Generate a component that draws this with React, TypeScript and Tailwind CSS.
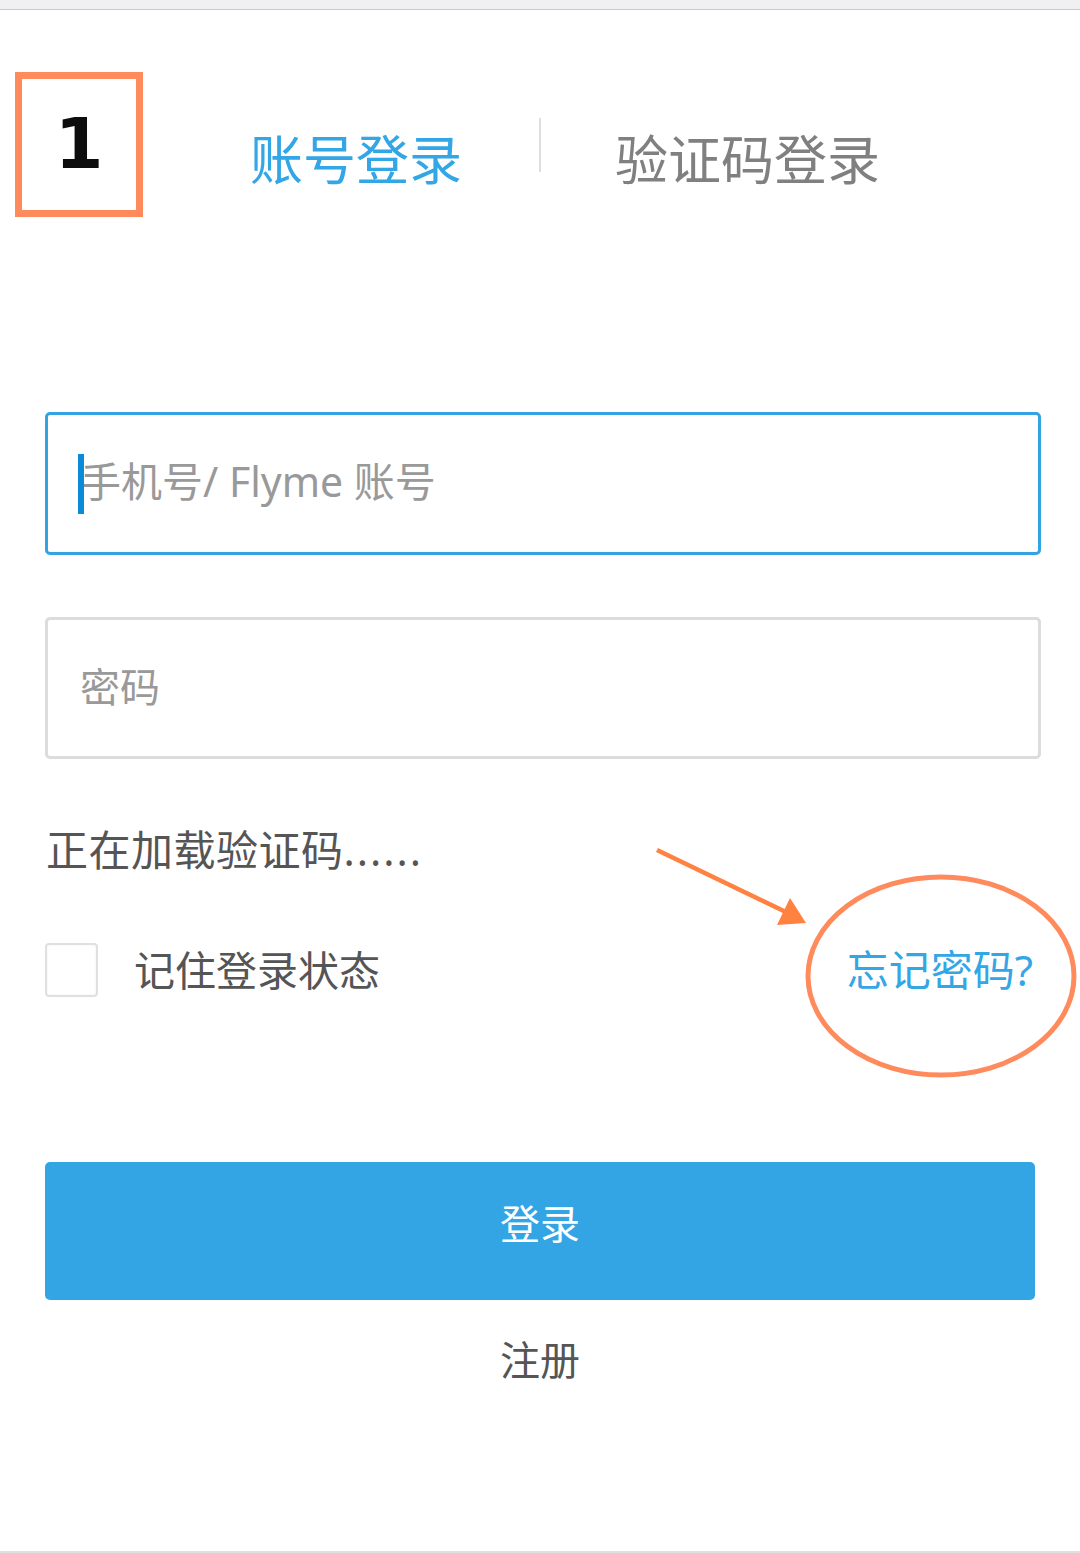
import React from 'react';

const font = { fontFamily: '"Noto Sans", "Noto Sans CJK SC", sans-serif' };

const App: React.FC = () => {
  return (
    <div
      className="relative h-[1553px] w-[1080px] overflow-hidden border-b-2 border-[#e0e0e0] bg-white"
      style={font}
    >
      {/* browser top strip */}
      <div className="h-[10px] border-b border-[#c8c8c8] bg-[#f0f0f2]" />

      {/* tabs */}
      <div className="mt-[108px] flex items-start pl-[250px]">
        <span className="mt-[3px] text-[53px] leading-[78px] text-[#33a6e6]">账号登录</span>
        <span className="ml-[77px] h-[54px] w-[2px] bg-[#dedede]" />
        <span className="ml-[74px] mt-[3px] text-[53px] leading-[78px] text-[#808080]">验证码登录</span>
      </div>

      <div className="flex flex-col px-[45px]">
        {/* account input */}
        <div className="relative mt-[213px] flex h-[143px] w-[996px] items-center rounded-[5px] border-[3px] border-[#33a3e3] pb-[5px] pl-[32px]">
          <span className="absolute left-[30px] top-[39px] h-[60px] w-[6px] bg-[#0b8ad8]" />
          <span className="text-[41px] leading-[41px] text-[#999]">手机号/ Flyme 账号</span>
        </div>

        {/* password input */}
        <div className="mt-[62px] flex h-[142px] w-[996px] items-center rounded-[5px] border-[3px] border-[#dcdcdc] pb-[3px] pl-[32px]">
          <span className="text-[40px] leading-[40px] text-[#999]">密码</span>
        </div>

        <div className="mt-[70px] pl-[1px] text-[42px] leading-[42px] tracking-[0.5px] text-[#555]">
          正在加载验证码<span className="tracking-[2px]">......</span>
        </div>

        {/* remember / forgot */}
        <div className="mt-[72px] flex h-[54px] w-[990px] items-center justify-between">
          <div className="flex items-center">
            <span className="h-[54px] w-[53px] rounded-[4px] border-2 border-[#e0e0e0] shadow-[inset_0_0_2px_rgba(0,0,0,0.08)]" />
            <span className="ml-[36px] text-[41px] leading-[41px] text-[#555]">记住登录状态</span>
          </div>
          <span className="pr-[2px] text-[42px] leading-[42px] text-[#33a6e6]">忘记密码?</span>
        </div>

        <button className="mt-[165px] flex h-[138px] w-[990px] items-center justify-center rounded-[5px] bg-[#33a5e5] pb-[14px] text-[40px] leading-[40px] text-white">
          登录
        </button>

        <div className="mt-[40px] w-[990px] text-center text-[40px] leading-[40px] text-[#555]">注册</div>
      </div>

      {/* annotation: numbered box */}
      <div className="absolute left-[15px] top-[72px] flex h-[145px] w-[128px] items-center justify-center border-[7px] border-[#ff8a5c] pb-[2px]">
        <span
          className="text-[70px] font-bold leading-none text-[#0d0d0d]"
          style={{ fontFamily: '"DejaVu Sans", sans-serif' }}
        >
          1
        </span>
      </div>

      {/* annotation: arrow + ellipse */}
      <svg className="pointer-events-none absolute left-0 top-0" width="1080" height="1553">
        <ellipse cx="941" cy="976" rx="133" ry="99" fill="none" stroke="#ff8a5c" strokeWidth="5" />
        <line x1="657" y1="850" x2="790" y2="914" stroke="#ff8240" strokeWidth="4.5" />
        <polygon points="790,898 806,923 777,925" fill="#ff8240" />
      </svg>
    </div>
  );
};

export default App;
